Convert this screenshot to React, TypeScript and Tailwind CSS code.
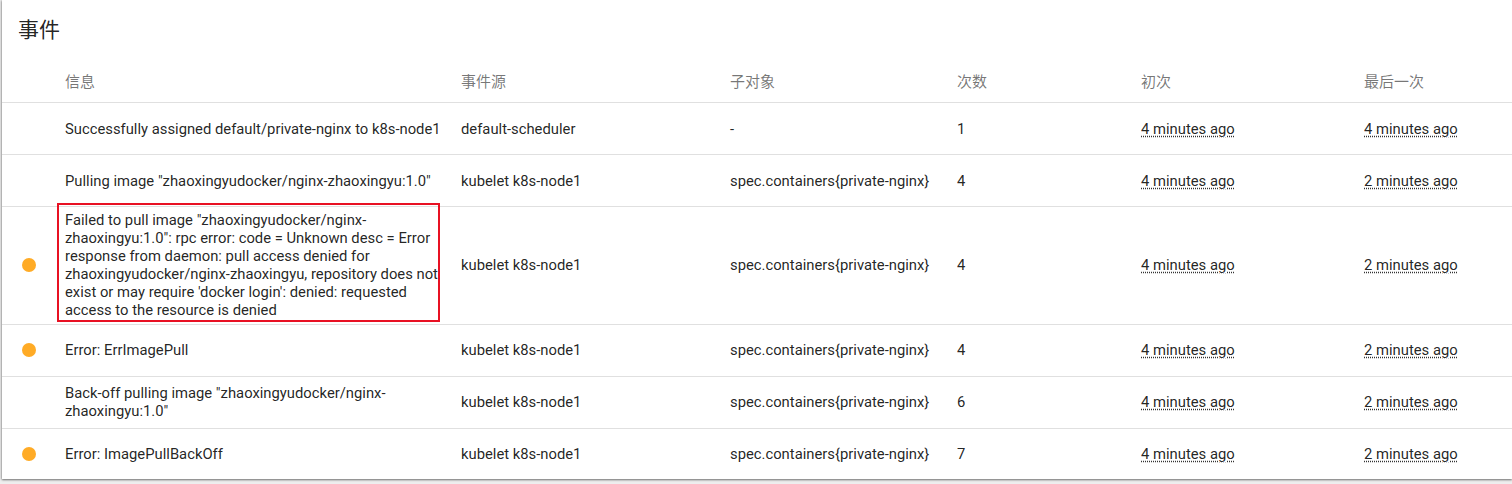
const rows = [
  { warn: false, nudge: true, msg: 'Successfully assigned default/private-nginx to k8s-node1', src: 'default-scheduler', obj: '-', n: '1', first: '4 minutes ago', last: '4 minutes ago' },
  { warn: false, nudge: true, msg: 'Pulling image "zhaoxingyudocker/nginx-zhaoxingyu:1.0"', src: 'kubelet k8s-node1', obj: 'spec.containers{private-nginx}', n: '4', first: '4 minutes ago', last: '2 minutes ago' },
  { warn: true, boxed: true, msg: 'Failed to pull image "zhaoxingyudocker/nginx-zhaoxingyu:1.0": rpc error: code = Unknown desc = Error response from daemon: pull access denied for zhaoxingyudocker/nginx-zhaoxingyu, repository does not exist or may require \'docker login\': denied: requested access to the resource is denied', src: 'kubelet k8s-node1', obj: 'spec.containers{private-nginx}', n: '4', first: '4 minutes ago', last: '2 minutes ago' },
  { warn: true, msg: 'Error: ErrImagePull', src: 'kubelet k8s-node1', obj: 'spec.containers{private-nginx}', n: '4', first: '4 minutes ago', last: '2 minutes ago' },
  { warn: false, msg: 'Back-off pulling image "zhaoxingyudocker/nginx-zhaoxingyu:1.0"', src: 'kubelet k8s-node1', obj: 'spec.containers{private-nginx}', n: '6', first: '4 minutes ago', last: '2 minutes ago' },
  { warn: true, msg: 'Error: ImagePullBackOff', src: 'kubelet k8s-node1', obj: 'spec.containers{private-nginx}', n: '7', first: '4 minutes ago', last: '2 minutes ago' },
];

const font = "font-['Roboto','Noto_Sans_CJK_SC',sans-serif]";

function Time({ children }: { children: string }) {
  return <span className="underline decoration-dotted decoration-[#333] underline-offset-2">{children}</span>;
}

export default function App() {
  return (
    <div className={`${font} h-[484px] w-[1512px] overflow-hidden bg-[#eeeeee]`}>
      <div className="ml-[2px] h-[479px] bg-white shadow-[0_1px_2px_rgba(0,0,0,0.5),-1px_0_2px_rgba(0,0,0,0.15)]">
        <h2 className="h-[63px] pl-4 pt-[15px] text-[21px] leading-[30px] font-normal text-[rgba(0,0,0,0.87)]">事件</h2>
        <table className="w-[1510px] table-fixed border-collapse text-[14.8px] leading-[18px] text-[rgba(0,0,0,0.87)]">
          <colgroup>
            <col className="w-[63px]" />
            <col className="w-[396px]" />
            <col className="w-[269px]" />
            <col className="w-[227px]" />
            <col className="w-[184px]" />
            <col className="w-[223px]" />
            <col />
          </colgroup>
          <thead>
            <tr className="h-[39px] border-b border-[#e0e0e0] text-left text-[15px] text-[rgba(0,0,0,0.54)]">
              <th className="font-normal" />
              <th className="font-normal">信息</th>
              <th className="font-normal">事件源</th>
              <th className="font-normal">子对象</th>
              <th className="font-normal">次数</th>
              <th className="font-normal">初次</th>
              <th className="font-normal">最后一次</th>
            </tr>
          </thead>
          <tbody>
            {rows.map((r, i) => (
              <tr key={i} className={`border-[#e0e0e0] ${r.boxed ? 'h-[118px]' : 'h-[52px]'} ${i < rows.length - 1 ? 'border-b' : ''} ${r.nudge ? '[&>td]:pt-[2px]' : ''}`}>
                <td className="pl-[20px]">
                  {r.warn && <div className="h-[14px] w-[14px] rounded-full bg-[#ffab26]" />}
                </td>
                <td className="relative pr-[18px]">
                  {r.msg}
                  {r.boxed && <div className="absolute top-[-4px] left-[-8px] h-[119px] w-[383px] border-2 border-[#e81123]" />}
                </td>
                <td>{r.src}</td>
                <td>{r.obj}</td>
                <td>{r.n}</td>
                <td><Time>{r.first}</Time></td>
                <td><Time>{r.last}</Time></td>
              </tr>
            ))}
          </tbody>
        </table>
      </div>
    </div>
  );
}
